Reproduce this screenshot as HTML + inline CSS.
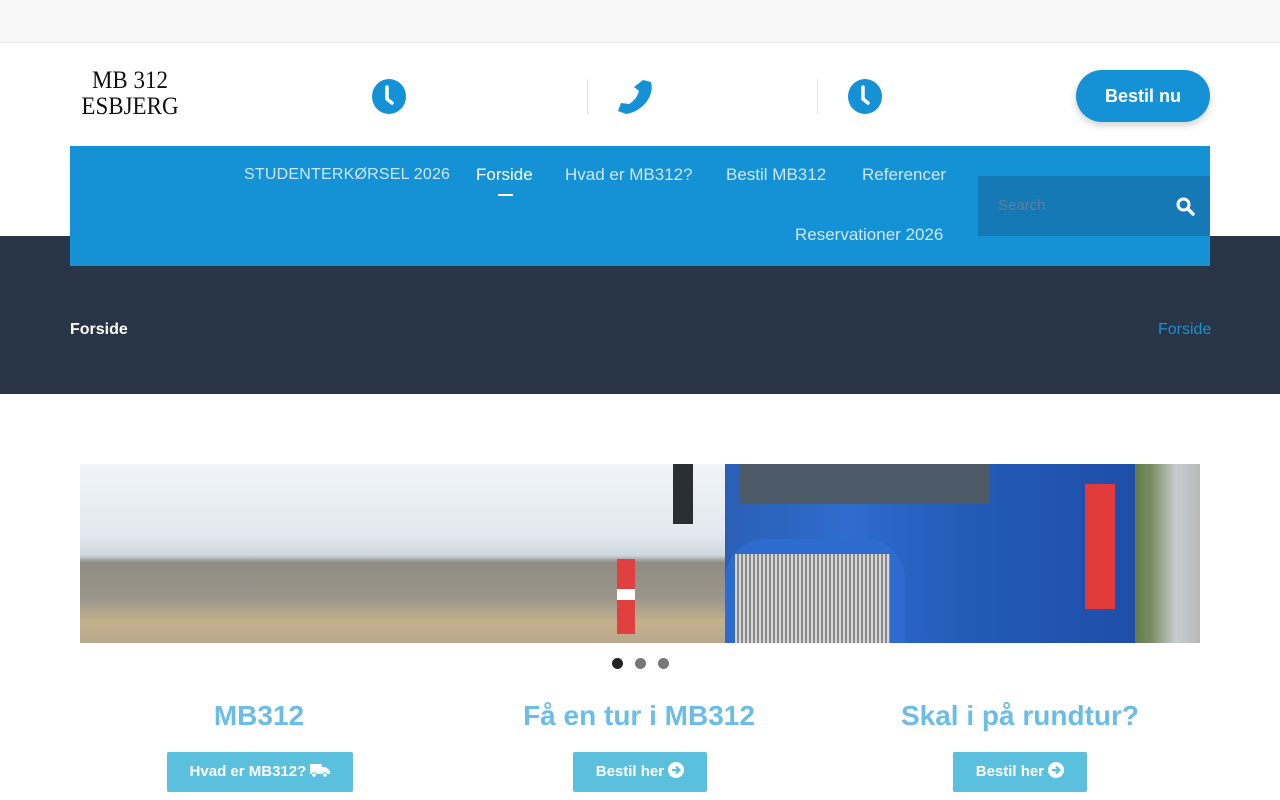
<!DOCTYPE html>
<html><head><meta charset="utf-8"><style>
*{margin:0;padding:0;box-sizing:border-box}
body{width:1280px;height:800px;overflow:hidden;background:#fff;font-family:"Liberation Sans",sans-serif;position:relative}
.topbar{position:absolute;left:0;top:0;width:1280px;height:43px;background:#f8f8f8;border-bottom:1px solid #e6e6e6}
.logo{position:absolute;left:75px;top:68px;font-family:"Liberation Serif",serif;font-size:25px;line-height:26px;color:#111;text-align:center;width:110px;transform:scaleX(.92)}
.ic{position:absolute;top:79px}
.sep{position:absolute;top:79px;width:1px;height:35px;background:#e2e2e2}
.btn{position:absolute;left:1076px;top:70px;width:134px;height:52px;border-radius:26px;background:#1591d6;color:#fff;font-size:18px;font-weight:bold;text-align:center;line-height:52px;box-shadow:0 3px 8px rgba(0,0,0,.2)}
.dark{position:absolute;left:0;top:236px;width:1280px;height:158px;background:#283547}
.nav{position:absolute;left:70px;top:146px;width:1140px;height:120px;background:#1591d6}
.nav a{position:absolute;color:#cfe6f6;font-size:17px;text-decoration:none;white-space:nowrap}
.search{position:absolute;left:908px;top:30px;width:232px;height:60px;background:#1479b5}
.search span{position:absolute;left:20px;top:21px;color:#5e7f97;font-size:15px}
.bc{position:absolute;top:321px;font-size:16px}
.slide{position:absolute;left:80px;top:464px;width:1120px;height:179px;overflow:hidden;background:linear-gradient(#f0f4f8 0%,#e2e8ef 40%,#cfd6dc 51%,#8e8c84 55%,#9a968c 75%,#c4b08c 88%,#b9a98c 100%)}
.slide div{position:absolute}
.dots{position:absolute;top:658px}
.dots i{position:absolute;width:11px;height:11px;border-radius:50%;background:#777}
h2{position:absolute;top:700px;font-size:28px;color:#6bbde6;font-weight:bold;text-align:center;width:360px}
.b2{position:absolute;top:752px;height:40px;background:#5bc0de;color:#fff;font-weight:bold;font-size:15px;line-height:40px;text-align:center;border-radius:2px}
</style></head><body>
<div class="topbar"></div>
<div class="logo">MB 312<br>ESBJERG</div>
<svg class="ic" style="left:372px" width="34" height="35" viewBox="0 0 34 35"><ellipse cx="17" cy="17.5" rx="17" ry="17.5" fill="#1591d6"/><path d="M15 8v12l5 4" stroke="#fff" stroke-width="3.5" fill="none" stroke-linecap="round"/></svg>
<div class="sep" style="left:587px"></div>
<svg class="ic" style="left:618px" width="36" height="35" viewBox="0 0 36 35"><path d="M25 1l8 2c4 14-9 30-25 32l-8-3 3-8 8 1c5-3 9-8 10-13l-5-4z" fill="#1591d6"/></svg>
<div class="sep" style="left:817px"></div>
<svg class="ic" style="left:848px" width="34" height="35" viewBox="0 0 34 35"><ellipse cx="17" cy="17.5" rx="17" ry="17.5" fill="#1591d6"/><path d="M15 8v12l5 4" stroke="#fff" stroke-width="3.5" fill="none" stroke-linecap="round"/></svg>
<div class="btn">Bestil nu</div>
<div class="dark"></div>
<div class="nav">
<a style="left:174px;top:20px;font-size:16px;letter-spacing:0.2px">STUDENTERKØRSEL 2026</a>
<a style="left:406px;top:19px;color:#fff">Forside</a>
<div style="position:absolute;left:428px;top:48px;width:15px;height:2px;background:#fff"></div>
<a style="left:495px;top:19px">Hvad er MB312?</a>
<a style="left:656px;top:19px">Bestil MB312</a>
<a style="left:792px;top:19px">Referencer</a>
<a style="left:725px;top:79px">Reservationer 2026</a>
<div class="search"><span>Search</span>
<svg style="position:absolute;left:198px;top:21px" width="19" height="19" viewBox="0 0 19 19"><circle cx="7.5" cy="7.5" r="5.5" stroke="#fff" stroke-width="3" fill="none"/><path d="M12 12l5 5" stroke="#fff" stroke-width="3.5" stroke-linecap="round"/></svg></div>
</div>
<div class="bc" style="left:70px;color:#fff;font-weight:bold">Forside</div>
<div class="bc" style="left:1158px;color:#1591d6">Forside</div>
<div class="slide">
<div style="left:1040px;top:0;width:80px;height:179px;background:linear-gradient(90deg,#4d6b3a,#7a8f62 40%,#c8ccd0 70%,#b8b8b8)"></div>
<div style="left:593px;top:0;width:20px;height:60px;background:#2a2f36"></div>
<div style="left:645px;top:0;width:410px;height:179px;background:linear-gradient(90deg,#2a5fb5,#2f6ccd 30%,#235ab8 60%,#1e4fa8)"></div>
<div style="left:660px;top:0;width:250px;height:40px;background:#4b5a66"></div>
<div style="left:645px;top:75px;width:180px;height:104px;background:#2e6bcf;border-radius:40px 40px 0 0"></div>
<div style="left:655px;top:90px;width:155px;height:89px;background:repeating-linear-gradient(90deg,#d8d8d8 0 2px,#8a8a8a 2px 4px)"></div>
<div style="left:1005px;top:20px;width:30px;height:125px;background:#e03a3a"></div>
<div style="left:537px;top:95px;width:18px;height:75px;background:linear-gradient(#e04040 40%,#fff 40% 55%,#e04040 55%)"></div>
</div>
<div class="dots"><i style="left:612px;background:#222"></i><i style="left:635px"></i><i style="left:658px"></i></div>
<h2 style="left:79px">MB312</h2>
<h2 style="left:459px">Få en tur i MB312</h2>
<h2 style="left:840px">Skal i på rundtur?</h2>
<div class="b2" style="left:167px;width:186px">Hvad er MB312? <svg width="20" height="15" viewBox="0 0 20 15" style="vertical-align:-2px"><path d="M0 1h12v10H0zM12 4h4l4 4v3h-8z" fill="#fff"/><circle cx="4" cy="12" r="2.3" fill="#fff" stroke="#5bc0de"/><circle cx="15" cy="12" r="2.3" fill="#fff" stroke="#5bc0de"/></svg></div>
<div class="b2" style="left:573px;width:134px">Bestil her <svg width="16" height="16" viewBox="0 0 16 16" style="vertical-align:-2px"><circle cx="8" cy="8" r="8" fill="#fff"/><path d="M4 8h7M8 4.5l3.5 3.5L8 11.5" stroke="#5bc0de" stroke-width="2.2" fill="none"/></svg></div>
<div class="b2" style="left:953px;width:134px">Bestil her <svg width="16" height="16" viewBox="0 0 16 16" style="vertical-align:-2px"><circle cx="8" cy="8" r="8" fill="#fff"/><path d="M4 8h7M8 4.5l3.5 3.5L8 11.5" stroke="#5bc0de" stroke-width="2.2" fill="none"/></svg></div>
</body></html>
